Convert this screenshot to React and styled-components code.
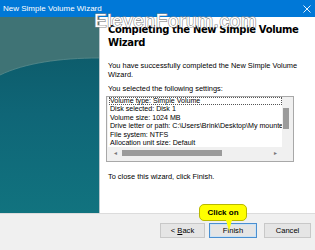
import React from 'react';
import styled, { createGlobalStyle } from 'styled-components';

const Global = createGlobalStyle`
  html, body { margin: 0; padding: 0; }
  body { width: 315px; height: 250px; overflow: hidden; font-family: "Liberation Sans", Arial, sans-serif; }
`;

const Window = styled.div`
  position: relative;
  width: 315px;
  height: 250px;
  display: flex;
  flex-direction: column;
  background: #fff;
  overflow: hidden;
`;

const TitleBar = styled.div`
  height: 17px;
  background: #0078d7;
  color: #fff;
  display: flex;
  align-items: center;
  justify-content: space-between;
  padding: 0 4px 0 3px;
  font-family: "Liberation Sans", Arial, sans-serif;
  font-size: 8px;
`;

const Body = styled.div`
  flex: 1;
  display: flex;
  min-height: 0;
`;

const SidePanel = styled.div`
  width: 99px;
  border-right: 1px solid #b9c7cc;
  background: linear-gradient(180deg, #0c5664 0%, #0f6677 50%, #11737f 100%);
  overflow: hidden;
  svg { display: block; }
`;

const Content = styled.div`
  flex: 1;
  padding: 7px 8px 0 8px;
  display: flex;
  flex-direction: column;
`;

const Heading = styled.h1`
  margin: 0 0 13px 0;
  font-family: "DejaVu Sans", Verdana, sans-serif;
  font-weight: bold;
  font-size: 10px;
  line-height: 12.5px;
  color: #000;
  letter-spacing: -0.35px;
`;

const Text = styled.p`
  margin: ${p => p.$top || 0}px 0 ${p => p.$gap || 0}px 0;
  font-size: 7.4px;
  line-height: 8.5px;
  color: #000;
`;

const ListBox = styled.div`
  width: 188px;
  height: 66px;
  margin-top: 2px;
  margin-left: -2px;
  box-sizing: border-box;
  border: 1px solid #a8a8a8;
  display: grid;
  grid-template-columns: 1fr 11px;
  grid-template-rows: 1fr 14px;
  background: #f0f0f0;
  overflow: hidden;
`;

const Lines = styled.div`
  overflow: hidden;
  background: #fff;
  margin-left: 1px;
  padding: 0 0 0 1px;
`;

const Line = styled.div`
  font-size: 7.1px;
  line-height: 8.5px;
  white-space: nowrap;
  padding-left: 1px;
  outline: ${p => (p.$focus ? '1px dotted #555' : 'none')};
  outline-offset: -1px;
`;

const VScroll = styled.div`
  background: #f0f0f0;
  display: flex;
  justify-content: center;
  padding: 11px 3px 0 0;
`;

const VThumb = styled.div`
  width: 6px;
  height: 21px;
  background: #9b9b9b;
`;

const HScroll = styled.div`
  background: #f0f0f0;
  display: flex;
  align-items: center;
  font-size: 5px;
  color: #777;
  padding: 0 2px 2px 6px;
  gap: 4px;
`;

const HThumb = styled.div`
  width: 100px;
  height: 6px;
  background: #9b9b9b;
`;

const Arrow = styled.span`
  margin-left: ${p => (p.$end ? 'auto' : '0')};
  margin-right: ${p => (p.$end ? '2px' : '0')};
`;

const Corner = styled.div`
  background: #f0f0f0;
`;

const Footer = styled.div`
  height: 27px;
  background: #f0f0f0;
  border-top: 1px solid #dcdcdc;
  display: flex;
  justify-content: flex-end;
  align-items: flex-start;
  padding: 9px 4px 0 0;
  gap: 4px;
`;

const Button = styled.button`
  width: ${p => p.$w || 45}px;
  height: 15px;
  margin-left: ${p => p.$ml || 0}px;
  padding: 0;
  background: #e5e5e5;
  border: 1px solid ${p => (p.$primary ? '#4a8fd0' : '#c8c8c8')};
  box-shadow: ${p => (p.$primary ? 'inset 0 0 0 1px #cde3f5' : 'none')};
  font-family: "Liberation Sans", Arial, sans-serif;
  font-size: 7.6px;
  color: #000;
  u { text-decoration: underline; }
`;

const Watermark = styled.div`
  position: absolute;
  left: 94px;
  top: 11px;
  font-family: "Liberation Sans", Arial, sans-serif;
  font-size: 19px;
  line-height: 1;
  letter-spacing: 0.6px;
  color: #fff;
  -webkit-text-stroke: 1.2px #8a8a8a;
  paint-order: stroke fill;
  pointer-events: none;
`;

const Callout = styled.div`
  position: absolute;
  left: 199px;
  top: 204px;
  width: 48px;
  height: 17px;
  background: #ffff00;
  border: 1px solid #b8b800;
  border-radius: 5px;
  box-sizing: border-box;
  display: flex;
  align-items: center;
  justify-content: center;
  font-size: 8px;
  font-weight: bold;
  color: #000;
  &::after {
    content: '';
    position: absolute;
    left: 26px;
    top: 15px;
    border-left: 3px solid transparent;
    border-right: 3px solid transparent;
    border-top: 11px solid #ffff00;
  }
`;

const settings = [
  'Volume type: Simple Volume',
  'Disk selected: Disk 1',
  'Volume size: 1024 MB',
  'Drive letter or path: C:\\Users\\Brink\\Desktop\\My mounte',
  'File system: NTFS',
  'Allocation unit size: Default',
  'Volume label: New Volume',
];

export default function App() {
  return (
    <Window>
      <Global />
      <TitleBar>
        <span>New Simple Volume Wizard</span>
        <svg width="8" height="8" viewBox="0 0 8 8">
          <path d="M0.5 0.5 L7.5 7.5 M7.5 0.5 L0.5 7.5" stroke="#fff" strokeWidth="0.9" />
        </svg>
      </TitleBar>
      <Body>
        <SidePanel>
          <svg width="99" height="205" viewBox="0 0 99 205">
            <path d="M0 0 H99 V41 C60 41 25 46 0 58 Z" fill="#3f7375" />
            <path d="M0 58 C25 46 60 41 99 41" stroke="#5b8c8d" strokeWidth="0.8" fill="none" />
          </svg>
        </SidePanel>
        <Content>
          <Heading>Completing the New Simple Volume Wizard</Heading>
          <Text $gap={6}>You have successfully completed the New Simple Volume Wizard.</Text>
          <Text>You selected the following settings:</Text>
          <ListBox>
            <Lines>
              {settings.map((s, i) => (
                <Line key={s} $focus={i === 0}>{s}</Line>
              ))}
            </Lines>
            <VScroll><VThumb /></VScroll>
            <HScroll>
              <Arrow>◄</Arrow>
              <HThumb />
              <Arrow $end>►</Arrow>
            </HScroll>
            <Corner />
          </ListBox>
          <Text $top={11}>To close this wizard, click Finish.</Text>
        </Content>
      </Body>
      <Footer>
        <Button>&lt; <u>B</u>ack</Button>
        <Button $primary $w={48}>Finish</Button>
        <Button $ml={3} $w={47}>Cancel</Button>
      </Footer>
      <Watermark>ElevenForum.com</Watermark>
      <Callout>Click on</Callout>
    </Window>
  );
}
